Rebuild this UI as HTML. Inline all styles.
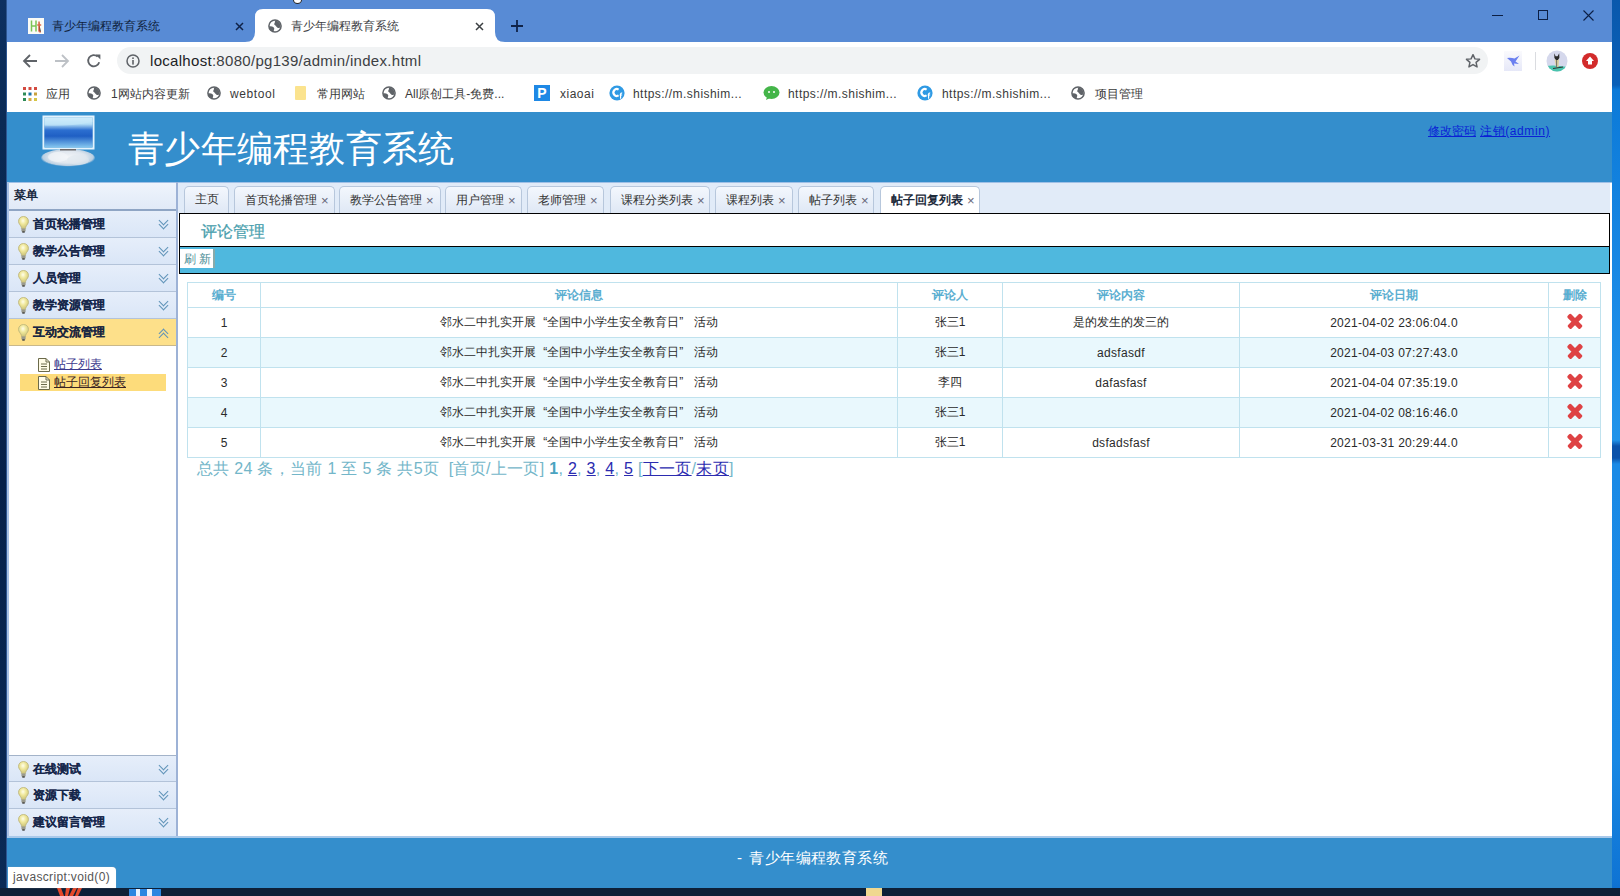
<!DOCTYPE html>
<html><head><meta charset="utf-8">
<style>
*{margin:0;padding:0;box-sizing:border-box}
html,body{width:1620px;height:896px;overflow:hidden;background:#fff;font-family:"Liberation Sans",sans-serif;position:relative}
.a{position:absolute}
.t12{font-size:12px;line-height:16px;white-space:nowrap}
.tb{font-size:12px;line-height:16px;font-weight:bold;white-space:nowrap}
.bm{top:86px;font-size:12px;line-height:16px;color:#3a3a3a;white-space:nowrap}
.mi{left:9px;width:167px;height:27px;background:linear-gradient(#e6eefa,#dae6f7);border-bottom:1px solid #b3c3d9}
.mi.act{background:#fde08a;border-bottom:1px solid #c9b88a}
.mi span{position:absolute;left:24px;top:5px;font-size:12px;line-height:16px;font-weight:bold;color:#15264a;white-space:nowrap;-webkit-text-stroke:.08px #15264a}
.mi.act span{color:#2a2412}
.bulb{position:absolute;left:9px;top:5px}
.chev{position:absolute;left:149px;top:8px;width:10px;height:10px}
.chev:before,.chev:after{content:"";position:absolute;left:2px;width:6px;height:6px;border-right:1.5px solid #5f93b8;border-bottom:1.5px solid #5f93b8;transform:rotate(45deg)}
.chev:before{top:-2px}.chev:after{top:2px}
.chev.up:before,.chev.up:after{transform:rotate(-135deg)}
.chev.up:before{top:3px}.chev.up:after{top:7px}
.tab{top:186px;height:27px;border:1px solid #b7c7dc;border-bottom:none;border-radius:5px 5px 0 0;background:linear-gradient(#f3f7fd,#dfe8f5);font-size:12px;line-height:25px;color:#333;padding-left:10px;white-space:nowrap}
.tab b{font-weight:normal;color:#667;margin-left:4px;font-size:13px;position:relative;top:1px}
.tab.sel{background:#fff;height:28px;color:#1c2a3a;font-weight:bold}
#tbl{border-collapse:collapse;width:1413px;table-layout:fixed}
#tbl td{border:1px solid #c0e2ee;height:30px;text-align:center;font-size:12px;color:#2a2a2a;white-space:nowrap;padding:0}
#tbl tr.th td{height:25px;color:#5aaed0;font-weight:bold}
#tbl tr.alt td{background:#e9f8fd}
.x{display:inline-block;width:16px;height:16px;position:relative;vertical-align:middle;top:-1.5px}
.x:before,.x:after{content:"";position:absolute;left:-1px;top:6px;width:18px;height:4.5px;background:#de4244;border-radius:1.5px;transform:rotate(45deg)}
.x:after{transform:rotate(-45deg)}
.lq{margin-left:7px}.rq{margin-right:7px}
.dt{letter-spacing:.3px}
</style></head><body>
<!-- tab strip -->
<div class="a" style="left:0;top:0;width:7px;height:896px;background:linear-gradient(#0d3060,#0a2a55 120px,#06214a 480px,#0a2a55 896px)"></div><div class="a" style="left:6px;top:0;width:1px;height:896px;background:#2d5590"></div>
<div class="a" style="left:1612px;top:0;width:8px;height:896px;background:linear-gradient(#0a58ac 0,#0a60b8 85px,#0c7ad8 90px,#1a8ae6 300px,#2194ea 440px,#0b52aa 446px,#0b52aa 458px,#1a8ae6 464px,#1888e4 760px,#0f74d4 880px,#0d6ccc 896px)"></div>
<div class="a" style="left:7px;top:0;width:1605px;height:42px;background:#588bd5"></div>
<div class="a" style="left:293px;top:-4px;width:9px;height:8px;border-radius:50%;background:#fff;border:1.5px solid #222"></div>
<!-- inactive tab -->
<svg class="a" style="left:28px;top:18px" width="16" height="16" viewBox="0 0 16 16"><rect width="16" height="16" fill="#fbfbf6"/><path d="M3.5 2.5v11M8 2.5v11M3.5 8h4.5" stroke="#7cc456" stroke-width="1.5"/><path d="M11 3.5v9.5q0 1 1.8 1M9.2 7h4" stroke="#de6a4a" stroke-width="1.5"/></svg>
<div class="a t12" style="left:52px;top:18px;color:#0f1f3c">青少年编程教育系统</div>
<svg class="a" style="left:235px;top:22px" width="9" height="9" viewBox="0 0 9 9"><path d="M1 1L8 8M8 1L1 8" stroke="#0f2248" stroke-width="1.5"/></svg>
<!-- active tab -->
<svg class="a" style="left:245px;top:9px" width="260" height="33" viewBox="0 0 260 33"><path d="M0 33Q10 33 10 23V8Q10 0 18 0H242Q250 0 250 8V23Q250 33 260 33Z" fill="#fff"/></svg>
<svg class="a" style="left:268px;top:19px" width="14" height="14" viewBox="0 0 14 14"><use href="#globe"/></svg>
<div class="a t12" style="left:291px;top:18px;color:#3c4043">青少年编程教育系统</div>
<svg class="a" style="left:475px;top:22px" width="9" height="9" viewBox="0 0 9 9"><path d="M1 1L8 8M8 1L1 8" stroke="#3c4043" stroke-width="1.5"/></svg>
<svg class="a" style="left:510px;top:19px" width="14" height="14" viewBox="0 0 14 14"><path d="M7 1V13M1 7H13" stroke="#0f2248" stroke-width="1.8"/></svg>
<!-- window controls -->
<div class="a" style="left:1492px;top:15px;width:11px;height:1px;background:#0c1f44"></div>
<div class="a" style="left:1538px;top:10px;width:10px;height:10px;border:1px solid #0c1f44"></div>
<svg class="a" style="left:1583px;top:10px" width="11" height="11" viewBox="0 0 11 11"><path d="M.5 .5L10.5 10.5M10.5 .5L.5 10.5" stroke="#0c1f44" stroke-width="1.1"/></svg>
<!-- toolbar -->
<div class="a" style="left:7px;top:42px;width:1605px;height:70px;background:#fff"></div>
<svg class="a" style="left:22px;top:53px" width="16" height="16" viewBox="0 0 16 16"><path d="M15 8H2M8 2L2 8L8 14" stroke="#5f6368" stroke-width="1.8" fill="none"/></svg>
<svg class="a" style="left:54px;top:53px" width="16" height="16" viewBox="0 0 16 16"><path d="M1 8H14M8 2L14 8L8 14" stroke="#bdc1c6" stroke-width="1.8" fill="none"/></svg>
<svg class="a" style="left:86px;top:53px" width="16" height="16" viewBox="0 0 16 16"><path d="M13.2 9.2A5.6 5.6 0 1 1 11.6 3.6" stroke="#5f6368" stroke-width="1.8" fill="none"/><path d="M9.6 1.6H14.4V6.4Z" fill="#5f6368"/></svg>
<div class="a" style="left:117px;top:47px;width:1371px;height:27px;border-radius:14px;background:#f1f3f4"></div>
<svg class="a" style="left:126px;top:54px" width="14" height="14" viewBox="0 0 14 14"><circle cx="7" cy="7" r="6" stroke="#5f6368" stroke-width="1.5" fill="none"/><rect x="6.2" y="6" width="1.6" height="4.6" fill="#5f6368"/><rect x="6.2" y="3.4" width="1.6" height="1.6" fill="#5f6368"/></svg>
<div class="a" id="url" style="left:150px;top:52px;font-size:15px;color:#202124;white-space:nowrap;letter-spacing:.3px">localhost<span style="color:#3c4043">:8080/pg139/admin/index.html</span></div>
<svg class="a" style="left:1465px;top:53px" width="16" height="16" viewBox="0 0 24 24"><path d="M12 2.5l2.9 6.3 6.9.7-5.2 4.6 1.5 6.8L12 17.4l-6.1 3.5 1.5-6.8-5.2-4.6 6.9-.7z" stroke="#5f6368" stroke-width="2.2" fill="none" stroke-linejoin="round"/></svg>
<div class="a" style="left:1504px;top:51px;width:18px;height:20px;background:linear-gradient(#fafafd,#e6e8f8)"></div>
<svg class="a" style="left:1505px;top:53px" width="16" height="16" viewBox="0 0 16 16"><path d="M14.5 2.5L9.5 5.5Q6 4.5 2 5L6 8.5Q7 12 9.5 13.5L9 10.5L14 11L10.5 8.5Z" fill="#6b80f0"/></svg>
<div class="a" style="left:1535px;top:52px;width:1px;height:18px;background:#dadce0"></div>
<svg class="a" style="left:1546px;top:50px" width="22" height="22" viewBox="0 0 22 22"><defs><clipPath id="avc"><circle cx="11" cy="11" r="10.5"/></clipPath></defs><g clip-path="url(#avc)"><rect width="22" height="22" fill="#d5d8ec"/><path d="M0 16Q8 14.5 22 17V22H0Z" fill="#49c4ad"/><path d="M8.6 9.5L10 17H12.5L13 9.5Z" fill="#d9cf9c"/><path d="M8.2 3.2L9.6 6.2H11.6L13.2 3.2L13.4 8L11.8 10H10L8.4 8Z" fill="#2a2a2a"/><path d="M7 18.5L17 17" stroke="#333" stroke-width="1"/><path d="M10.6 10V17" stroke="#555" stroke-width=".8"/></g></svg>
<svg class="a" style="left:1582px;top:53px" width="16" height="16" viewBox="0 0 16 16"><circle cx="8" cy="8" r="8" fill="#d22b2b"/><path d="M8 3.5L12 8H10V11.5H6V8H4Z" fill="#fff"/></svg>
<!-- bookmarks -->
<svg class="a" style="left:23px;top:87px" width="14" height="14" viewBox="0 0 14 14">
<rect x="0" y="0" width="3" height="3" fill="#d34a3f"/><rect x="5.5" y="0" width="3" height="3" fill="#d34a3f"/><rect x="11" y="0" width="3" height="3" fill="#d34a3f"/>
<rect x="0" y="5.5" width="3" height="3" fill="#2e8b57"/><rect x="5.5" y="5.5" width="3" height="3" fill="#1b73a8"/><rect x="11" y="5.5" width="3" height="3" fill="#c9a23c"/>
<rect x="0" y="11" width="3" height="3" fill="#2e8b57"/><rect x="5.5" y="11" width="3" height="3" fill="#d4a94a"/><rect x="11" y="11" width="3" height="3" fill="#d6c645"/></svg>
<div class="a bm" style="left:46px">应用</div>
<svg class="a gl" style="left:87px;top:86px" width="14" height="14" viewBox="0 0 14 14"><use href="#globe"/></svg>
<div class="a bm" style="left:111px">1网站内容更新</div>
<svg class="a gl" style="left:207px;top:86px" width="14" height="14" viewBox="0 0 14 14"><use href="#globe"/></svg>
<div class="a bm" style="left:230px;letter-spacing:.6px">webtool</div>
<div class="a" style="left:295px;top:86px;width:11px;height:14px;background:#fbe38e;border-radius:1px"></div>
<div class="a bm" style="left:317px">常用网站</div>
<svg class="a gl" style="left:382px;top:86px" width="14" height="14" viewBox="0 0 14 14"><use href="#globe"/></svg>
<div class="a bm" style="left:405px">All原创工具-免费...</div>
<div class="a" style="left:534px;top:85px;width:16px;height:16px;background:#1e88e5;color:#fff;font:bold 14px/16px 'Liberation Sans',sans-serif;text-align:center">P</div>
<div class="a bm" style="left:560px;letter-spacing:.5px">xiaoai</div>
<svg class="a" style="left:609px;top:85px" width="16" height="16" viewBox="0 0 16 16"><use href="#cf"/></svg>
<div class="a bm" style="left:633px; letter-spacing:.45px">https://m.shishim...</div>
<svg class="a" style="left:763px;top:85px" width="17" height="16" viewBox="0 0 17 16"><ellipse cx="8.5" cy="7.5" rx="8" ry="6.5" fill="#44b549"/><path d="M4 12L3 15L7 13Z" fill="#44b549"/><circle cx="6" cy="7" r="1" fill="#fff"/><circle cx="11" cy="7" r="1" fill="#fff"/></svg>
<div class="a bm" style="left:788px; letter-spacing:.45px">https://m.shishim...</div>
<svg class="a" style="left:917px;top:85px" width="16" height="16" viewBox="0 0 16 16"><use href="#cf"/></svg>
<div class="a bm" style="left:942px; letter-spacing:.45px">https://m.shishim...</div>
<svg class="a gl" style="left:1071px;top:86px" width="14" height="14" viewBox="0 0 14 14"><use href="#globe"/></svg>
<div class="a bm" style="left:1095px">项目管理</div>
<svg width="0" height="0" style="position:absolute">
<defs>
<g id="globe"><circle cx="7" cy="7" r="6.1" fill="#fff" stroke="#5f6368" stroke-width="1.5"/><path d="M6.6 1.2Q10.8 1.6 12.4 5.2L12.6 8.6Q10.6 9.6 9.2 8.4Q7.8 7.2 7.2 6.2Q5.6 5.8 6.4 4.2Q7.6 3.4 6.6 1.2Z" fill="#5f6368"/><path d="M1 7.4Q3.6 6.8 5.6 8.2Q7 9.6 5.8 11.2Q5.6 12.4 6.6 12.9Q2.4 12.8 1.2 9Z" fill="#5f6368"/></g>
<g id="cf"><circle cx="8" cy="8" r="7.6" fill="#2f9ae4"/><path d="M9.6 4.6A3.4 3.4 0 1 0 9.6 10.4" stroke="#fff" stroke-width="2.2" fill="none"/><path d="M13.2 8.2q-1.4-.4-1.6 1v4.6M10.6 10h2.6" stroke="#fff" stroke-width="1.2" fill="none"/></g>
</defs></svg>
<!-- app header -->
<div class="a" style="left:7px;top:112px;width:1605px;height:70px;background:#348ecc"></div>
<svg class="a" style="left:36px;top:112px" width="66" height="60" viewBox="0 0 66 60">
<defs><linearGradient id="scr" x1="0" y1="0" x2="0" y2="1"><stop offset="0" stop-color="#d8f0fc"/><stop offset=".22" stop-color="#b4def6"/><stop offset=".42" stop-color="#2c6fd0"/><stop offset=".62" stop-color="#1f5fc4"/><stop offset="1" stop-color="#86c8f0"/></linearGradient>
<radialGradient id="cld" cx=".5" cy=".45" r=".55"><stop offset="0" stop-color="#f2f5f8"/><stop offset=".6" stop-color="#dfe6ee"/><stop offset=".85" stop-color="#b9cfe2"/><stop offset="1" stop-color="#3a8fcc" stop-opacity="0"/></radialGradient></defs>
<ellipse cx="32" cy="46" rx="27" ry="9" fill="url(#cld)"/><ellipse cx="22" cy="45" rx="10" ry="5" fill="#f4f7fa" opacity=".6"/><ellipse cx="42" cy="48" rx="11" ry="5" fill="#dfe7ef" opacity=".6"/>
<rect x="7.5" y="4.5" width="50" height="32" fill="none" stroke="#e4f3fd" stroke-width="2"/>
<rect x="8.5" y="5.5" width="48" height="30" fill="url(#scr)"/>
<path d="M8.5 13.5Q30 15 56.5 10V5.5H8.5Z" fill="#c9e9fa" opacity=".55"/>
<rect x="24" y="37" width="16" height="1.5" fill="#6f6a6a"/>
</svg>
<div class="a" style="left:128px;top:124px;font-size:36px;line-height:50px;color:#fff;white-space:nowrap;letter-spacing:.3px">青少年编程教育系统</div>
<div class="a t12" style="left:1428px;top:123px;color:#0a1fd6;text-decoration:underline;white-space:nowrap">修改密码</div>
<div class="a t12" style="left:1480px;top:123px;color:#0a1fd6;text-decoration:underline;white-space:nowrap;letter-spacing:.6px">注销(admin)</div>

<!-- sidebar -->
<div class="a" style="left:7px;top:182px;width:171px;height:655px;background:#fff"></div>
<div class="a" style="left:7px;top:182px;width:2px;height:655px;background:#a9c2e6"></div>
<div class="a" style="left:176px;top:182px;width:3px;height:655px;background:#9db2d6"></div>
<div class="a" style="left:9px;top:182px;width:167px;height:1px;background:#9fc0e6"></div>
<div class="a" style="left:9px;top:183px;width:167px;height:26px;background:linear-gradient(#eff4fc,#e1eaf7)"></div>
<div class="a" style="left:9px;top:209px;width:167px;height:2px;background:#8fa5c4"></div>
<div class="a tb" style="left:14px;top:187px;color:#18283e">菜单</div>

<div class="mi a" style="top:211px"><svg class="bulb" width="11" height="17" viewBox="0 0 11 17"><defs><radialGradient id="bg1" cx=".45" cy=".35" r=".6"><stop offset="0" stop-color="#fffeea"/><stop offset=".5" stop-color="#efe79a"/><stop offset="1" stop-color="#cfc77e"/></radialGradient></defs><path d="M5.5 .5C8.5 .5 10.5 2.6 10.5 5.4C10.5 7.6 8.6 9 7.6 11.2V12.5H3.4V11.2C2.4 9 .5 7.6 .5 5.4C.5 2.6 2.5 .5 5.5 .5Z" fill="url(#bg1)" stroke="#bdb57a" stroke-width=".8"/><path d="M3.4 12.5H7.6V15L6.5 16.3H4.5L3.4 15Z" fill="#9a9a8c"/><path d="M4.3 16H6.7" stroke="#333" stroke-width="1.2"/></svg><span>首页轮播管理</span><i class="chev"></i></div>
<div class="mi a" style="top:238px"><svg class="bulb" width="11" height="17" viewBox="0 0 11 17"><defs><radialGradient id="bg1" cx=".45" cy=".35" r=".6"><stop offset="0" stop-color="#fffeea"/><stop offset=".5" stop-color="#efe79a"/><stop offset="1" stop-color="#cfc77e"/></radialGradient></defs><path d="M5.5 .5C8.5 .5 10.5 2.6 10.5 5.4C10.5 7.6 8.6 9 7.6 11.2V12.5H3.4V11.2C2.4 9 .5 7.6 .5 5.4C.5 2.6 2.5 .5 5.5 .5Z" fill="url(#bg1)" stroke="#bdb57a" stroke-width=".8"/><path d="M3.4 12.5H7.6V15L6.5 16.3H4.5L3.4 15Z" fill="#9a9a8c"/><path d="M4.3 16H6.7" stroke="#333" stroke-width="1.2"/></svg><span>教学公告管理</span><i class="chev"></i></div>
<div class="mi a" style="top:265px"><svg class="bulb" width="11" height="17" viewBox="0 0 11 17"><defs><radialGradient id="bg1" cx=".45" cy=".35" r=".6"><stop offset="0" stop-color="#fffeea"/><stop offset=".5" stop-color="#efe79a"/><stop offset="1" stop-color="#cfc77e"/></radialGradient></defs><path d="M5.5 .5C8.5 .5 10.5 2.6 10.5 5.4C10.5 7.6 8.6 9 7.6 11.2V12.5H3.4V11.2C2.4 9 .5 7.6 .5 5.4C.5 2.6 2.5 .5 5.5 .5Z" fill="url(#bg1)" stroke="#bdb57a" stroke-width=".8"/><path d="M3.4 12.5H7.6V15L6.5 16.3H4.5L3.4 15Z" fill="#9a9a8c"/><path d="M4.3 16H6.7" stroke="#333" stroke-width="1.2"/></svg><span>人员管理</span><i class="chev"></i></div>
<div class="mi a" style="top:292px"><svg class="bulb" width="11" height="17" viewBox="0 0 11 17"><defs><radialGradient id="bg1" cx=".45" cy=".35" r=".6"><stop offset="0" stop-color="#fffeea"/><stop offset=".5" stop-color="#efe79a"/><stop offset="1" stop-color="#cfc77e"/></radialGradient></defs><path d="M5.5 .5C8.5 .5 10.5 2.6 10.5 5.4C10.5 7.6 8.6 9 7.6 11.2V12.5H3.4V11.2C2.4 9 .5 7.6 .5 5.4C.5 2.6 2.5 .5 5.5 .5Z" fill="url(#bg1)" stroke="#bdb57a" stroke-width=".8"/><path d="M3.4 12.5H7.6V15L6.5 16.3H4.5L3.4 15Z" fill="#9a9a8c"/><path d="M4.3 16H6.7" stroke="#333" stroke-width="1.2"/></svg><span>教学资源管理</span><i class="chev"></i></div>
<div class="mi a act" style="top:319px"><svg class="bulb" width="11" height="17" viewBox="0 0 11 17"><defs><radialGradient id="bg1" cx=".45" cy=".35" r=".6"><stop offset="0" stop-color="#fffeea"/><stop offset=".5" stop-color="#efe79a"/><stop offset="1" stop-color="#cfc77e"/></radialGradient></defs><path d="M5.5 .5C8.5 .5 10.5 2.6 10.5 5.4C10.5 7.6 8.6 9 7.6 11.2V12.5H3.4V11.2C2.4 9 .5 7.6 .5 5.4C.5 2.6 2.5 .5 5.5 .5Z" fill="url(#bg1)" stroke="#bdb57a" stroke-width=".8"/><path d="M3.4 12.5H7.6V15L6.5 16.3H4.5L3.4 15Z" fill="#9a9a8c"/><path d="M4.3 16H6.7" stroke="#333" stroke-width="1.2"/></svg><span>互动交流管理</span><i class="chev up"></i></div>
<div class="a" style="left:38px;top:358px;width:12px;height:14px"><svg width="12" height="14" viewBox="0 0 12 14"><path d="M.5 .5H8L11.5 4V13.5H.5Z" fill="#fffbe6" stroke="#6b6a4a"/><path d="M8 .5V4H11.5" fill="none" stroke="#6b6a4a"/><path d="M3 6H9M3 8.5H9M3 11H9" stroke="#6b6a4a"/></svg></div>
<div class="a t12" style="left:54px;top:356px;color:#3d3a8e;text-decoration:underline">帖子列表</div>
<div class="a" style="left:20px;top:374px;width:146px;height:17px;background:#fddc7b"></div>
<div class="a" style="left:38px;top:376px;width:12px;height:14px"><svg width="12" height="14" viewBox="0 0 12 14"><path d="M.5 .5H8L11.5 4V13.5H.5Z" fill="#fffbe6" stroke="#6b6a4a"/><path d="M8 .5V4H11.5" fill="none" stroke="#6b6a4a"/><path d="M3 6H9M3 8.5H9M3 11H9" stroke="#6b6a4a"/></svg></div>
<div class="a t12" style="left:54px;top:374px;color:#3a2424;text-decoration:underline">帖子回复列表</div>

<div class="a" style="left:9px;top:755px;width:167px;height:1px;background:#a3b3c9"></div>
<div class="mi a" style="top:756px;height:26px"><svg class="bulb" width="11" height="17" viewBox="0 0 11 17"><defs><radialGradient id="bg1" cx=".45" cy=".35" r=".6"><stop offset="0" stop-color="#fffeea"/><stop offset=".5" stop-color="#efe79a"/><stop offset="1" stop-color="#cfc77e"/></radialGradient></defs><path d="M5.5 .5C8.5 .5 10.5 2.6 10.5 5.4C10.5 7.6 8.6 9 7.6 11.2V12.5H3.4V11.2C2.4 9 .5 7.6 .5 5.4C.5 2.6 2.5 .5 5.5 .5Z" fill="url(#bg1)" stroke="#bdb57a" stroke-width=".8"/><path d="M3.4 12.5H7.6V15L6.5 16.3H4.5L3.4 15Z" fill="#9a9a8c"/><path d="M4.3 16H6.7" stroke="#333" stroke-width="1.2"/></svg><span>在线测试</span><i class="chev"></i></div>
<div class="mi a" style="top:782px"><svg class="bulb" width="11" height="17" viewBox="0 0 11 17"><defs><radialGradient id="bg1" cx=".45" cy=".35" r=".6"><stop offset="0" stop-color="#fffeea"/><stop offset=".5" stop-color="#efe79a"/><stop offset="1" stop-color="#cfc77e"/></radialGradient></defs><path d="M5.5 .5C8.5 .5 10.5 2.6 10.5 5.4C10.5 7.6 8.6 9 7.6 11.2V12.5H3.4V11.2C2.4 9 .5 7.6 .5 5.4C.5 2.6 2.5 .5 5.5 .5Z" fill="url(#bg1)" stroke="#bdb57a" stroke-width=".8"/><path d="M3.4 12.5H7.6V15L6.5 16.3H4.5L3.4 15Z" fill="#9a9a8c"/><path d="M4.3 16H6.7" stroke="#333" stroke-width="1.2"/></svg><span>资源下载</span><i class="chev"></i></div>
<div class="mi a" style="top:809px;height:28px"><svg class="bulb" width="11" height="17" viewBox="0 0 11 17"><defs><radialGradient id="bg1" cx=".45" cy=".35" r=".6"><stop offset="0" stop-color="#fffeea"/><stop offset=".5" stop-color="#efe79a"/><stop offset="1" stop-color="#cfc77e"/></radialGradient></defs><path d="M5.5 .5C8.5 .5 10.5 2.6 10.5 5.4C10.5 7.6 8.6 9 7.6 11.2V12.5H3.4V11.2C2.4 9 .5 7.6 .5 5.4C.5 2.6 2.5 .5 5.5 .5Z" fill="url(#bg1)" stroke="#bdb57a" stroke-width=".8"/><path d="M3.4 12.5H7.6V15L6.5 16.3H4.5L3.4 15Z" fill="#9a9a8c"/><path d="M4.3 16H6.7" stroke="#333" stroke-width="1.2"/></svg><span>建议留言管理</span><i class="chev"></i></div>

<!-- main tabs -->
<div class="a" style="left:178px;top:182px;width:1434px;height:1px;background:#9fc0e6"></div>
<div class="a" style="left:178px;top:183px;width:1432px;height:30px;background:#e1ebf8"></div>
<div class="tab a" style="left:184px;width:45px">主页</div>
<div class="tab a" style="left:234px;width:101px">首页轮播管理<b>×</b></div>
<div class="tab a" style="left:339px;width:102px">教学公告管理<b>×</b></div>
<div class="tab a" style="left:445px;width:77px">用户管理<b>×</b></div>
<div class="tab a" style="left:527px;width:77px">老师管理<b>×</b></div>
<div class="tab a" style="left:610px;width:100px">课程分类列表<b>×</b></div>
<div class="tab a" style="left:715px;width:78px">课程列表<b>×</b></div>
<div class="tab a" style="left:798px;width:76px">帖子列表<b>×</b></div>
<div class="tab a sel" style="left:880px;width:100px">帖子回复列表<b>×</b></div>

<!-- panel -->
<div class="a" style="left:178px;top:213px;width:1434px;height:624px;background:#fff"></div>
<div class="a" style="left:179px;top:213px;width:1431px;height:61px;border:1px solid #000;border-width:1px 1px 1px 1px"></div>
<div class="a" style="left:180px;top:246px;width:1429px;height:1px;background:#000"></div>
<div class="a" style="left:180px;top:247px;width:1429px;height:26px;background:#4fb8de"></div>
<div class="a" style="left:201px;top:222px;font-size:16px;line-height:20px;color:#4a9fae;-webkit-text-stroke:.25px #4a9fae">评论管理</div>
<div class="a" style="left:180px;top:249px;width:35px;height:19px;background:#fff;border-right:2px solid #8aa"></div>
<div class="a t12" style="left:184px;top:251px;color:#4b8d96;font-size:12px">刷 新</div>

<!-- table -->
<table class="a" id="tbl" style="left:187px;top:282px">
<colgroup><col style="width:73px"><col style="width:637px"><col style="width:105px"><col style="width:237px"><col style="width:309px"><col style="width:52px"></colgroup>
<tr class="th"><td>编号</td><td>评论信息</td><td>评论人</td><td>评论内容</td><td>评论日期</td><td>删除</td></tr>
<tr><td>1</td><td>邻水二中扎实开展<span class="lq">“</span>全国中小学生安全教育日<span class="rq">”</span> 活动</td><td>张三1</td><td>是的发生的发三的</td><td class="dt">2021-04-02 23:06:04.0</td><td><i class="x"></i></td></tr>
<tr class="alt"><td>2</td><td>邻水二中扎实开展<span class="lq">“</span>全国中小学生安全教育日<span class="rq">”</span> 活动</td><td>张三1</td><td class="dt">adsfasdf</td><td class="dt">2021-04-03 07:27:43.0</td><td><i class="x"></i></td></tr>
<tr><td>3</td><td>邻水二中扎实开展<span class="lq">“</span>全国中小学生安全教育日<span class="rq">”</span> 活动</td><td>李四</td><td class="dt">dafasfasf</td><td class="dt">2021-04-04 07:35:19.0</td><td><i class="x"></i></td></tr>
<tr class="alt"><td>4</td><td>邻水二中扎实开展<span class="lq">“</span>全国中小学生安全教育日<span class="rq">”</span> 活动</td><td>张三1</td><td></td><td class="dt">2021-04-02 08:16:46.0</td><td><i class="x"></i></td></tr>
<tr><td>5</td><td>邻水二中扎实开展<span class="lq">“</span>全国中小学生安全教育日<span class="rq">”</span> 活动</td><td>张三1</td><td class="dt">dsfadsfasf</td><td class="dt">2021-03-31 20:29:44.0</td><td><i class="x"></i></td></tr>
</table>
<div class="a" id="pager" style="left:197px;top:458px;font-size:16px;line-height:22px;letter-spacing:.3px;color:#73b6c9;white-space:nowrap">总共 24 条，当前 1 至 5 条 共5页 &nbsp;[首页/上一页] <b style="color:#4aa3c0">1</b>, <u style="color:#2b2bb0">2</u>, <u style="color:#2b2bb0">3</u>, <u style="color:#2b2bb0">4</u>, <u style="color:#2b2bb0">5</u> [<u style="color:#2b2bb0">下一页</u>/<u style="color:#2b2bb0">末页</u>]</div>

<!-- footer -->
<div class="a" style="left:7px;top:836px;width:1605px;height:2px;background:#a9c9ea"></div>
<div class="a" style="left:7px;top:838px;width:1605px;height:50px;background:#348ecc"></div>
<div class="a" style="left:737px;top:848px;font-size:15px;line-height:20px;color:#fff;white-space:nowrap;letter-spacing:.4px">-<span style="margin-left:7px">青少年编程教育系统</span></div>
<div class="a" style="left:0;top:888px;width:1620px;height:8px;background:#0d2038"></div>
<svg class="a" style="left:56px;top:888px" width="27" height="8" viewBox="0 0 27 8"><path d="M1 0H5L8 8H4ZM10 0H14L12 8H9ZM17 0H21L17 8H13ZM22 0H26L22 8H19Z" fill="#e5482a"/></svg>
<div class="a" style="left:129px;top:889px;width:32px;height:7px;background:#2b86e0"></div>
<div class="a" style="left:136px;top:889px;width:4px;height:7px;background:#e6f2ff"></div>
<div class="a" style="left:147px;top:889px;width:5px;height:7px;background:#e6f2ff"></div>
<div class="a" style="left:866px;top:888px;width:16px;height:8px;background:#f0d890"></div>
<div class="a" style="left:8px;top:867px;width:108px;height:21px;background:#fff;border-radius:0 4px 0 0;box-shadow:0 0 1px #aaa"></div>
<div class="a" style="left:13px;top:869px;font-size:12px;line-height:17px;color:#555;white-space:nowrap;letter-spacing:.35px">javascript:void(0)</div>
</body></html>
